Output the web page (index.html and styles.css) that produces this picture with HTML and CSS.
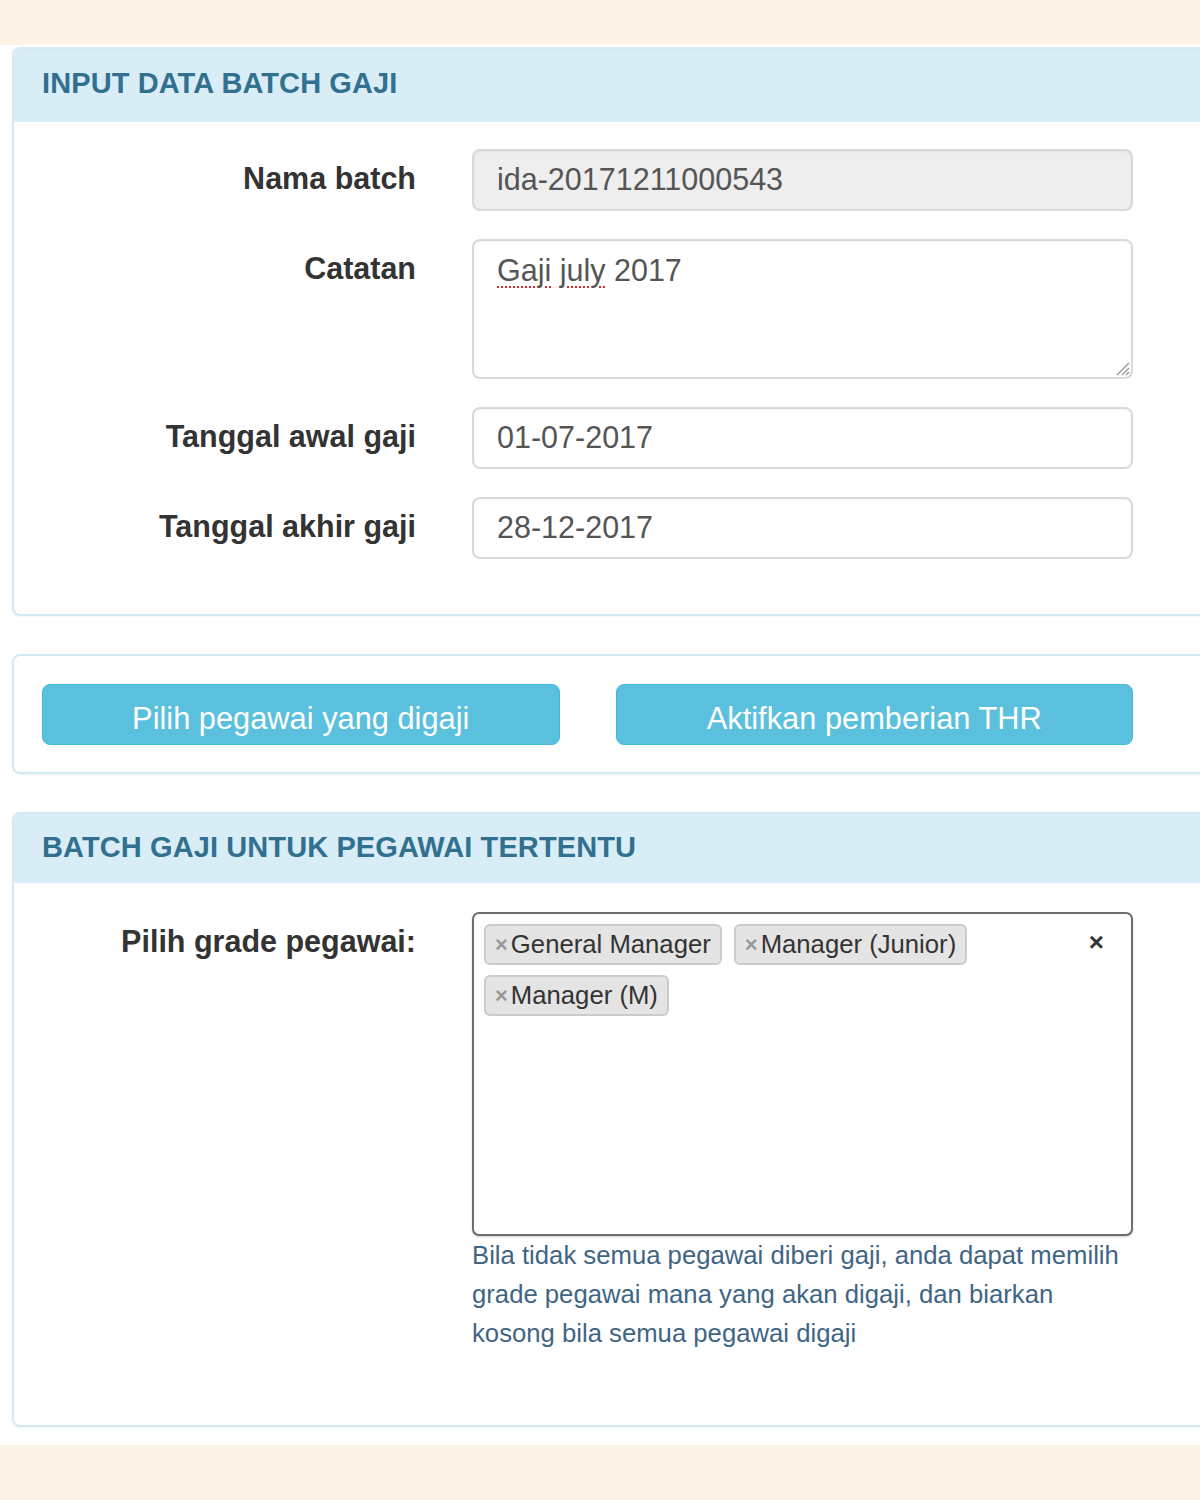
FILE: index.html
```html
<!DOCTYPE html>
<html lang="id">
<head>
<meta charset="utf-8">
<title>Input Data Batch Gaji</title>
<link rel="stylesheet" href="styles.css">
</head>
<body>
<div class="page">
  <section class="panel">
    <div class="panel-heading heading-lg"><h3 class="panel-title">INPUT DATA BATCH GAJI</h3></div>
    <div class="panel-body form-body">
      <div class="form-row">
        <label class="form-label">Nama batch</label>
        <div class="form-control readonly">ida-20171211000543</div>
      </div>
      <div class="form-row">
        <label class="form-label">Catatan</label>
        <div class="form-control textarea"><span class="misspelled">Gaji</span> <span class="misspelled">july</span> 2017<svg class="grip" width="16" height="16" viewBox="0 0 16 16"><path d="M15 3 L3 15 M15 8 L8 15 M15 12 L12 15" stroke="#9a9a9a" stroke-width="1.4" fill="none"/></svg></div>
      </div>
      <div class="form-row">
        <label class="form-label">Tanggal awal gaji</label>
        <div class="form-control">01-07-2017</div>
      </div>
      <div class="form-row">
        <label class="form-label">Tanggal akhir gaji</label>
        <div class="form-control">28-12-2017</div>
      </div>
    </div>
  </section>

  <section class="panel panel-actions">
    <div class="btn-row">
      <button class="btn btn-info">Pilih pegawai yang digaji</button>
      <button class="btn btn-info">Aktifkan pemberian THR</button>
    </div>
  </section>

  <section class="panel">
    <div class="panel-heading heading-sm"><h3 class="panel-title">BATCH GAJI UNTUK PEGAWAI TERTENTU</h3></div>
    <div class="panel-body grade-body">
      <div class="form-row">
        <label class="form-label">Pilih grade pegawai:</label>
        <div class="grade-field">
          <div class="select-box">
            <ul class="choices">
              <li class="choice"><span class="choice-x">×</span>General Manager</li>
              <li class="choice"><span class="choice-x">×</span>Manager (Junior)</li>
              <li class="choice"><span class="choice-x">×</span>Manager (M)</li>
            </ul>
            <span class="clear-all">×</span>
          </div>
          <p class="help-block">Bila tidak semua pegawai diberi gaji, anda dapat memilih grade pegawai mana yang akan digaji, dan biarkan kosong bila semua pegawai digaji</p>
        </div>
      </div>
    </div>
  </section>
</div>
</body>
</html>
```

FILE: styles.css
```css
* { box-sizing: border-box; }

html, body {
  margin: 0;
  padding: 0;
}

body {
  background: #fdf3e6;
  font-family: "Liberation Sans", Arial, Helvetica, sans-serif;
  color: #333;
  overflow: hidden;
}

.page {
  margin-top: 45px;
  height: 1400px;
  background: #ffffff;
  padding: 2px 0 0 12px;
  overflow: hidden;
}

.panel {
  width: 1230px;
  background: #fff;
  border: 2px solid #d5e9f2;
  border-radius: 8px;
  box-shadow: 0 1px 2px rgba(120, 170, 200, 0.12);
}

.panel + .panel {
  margin-top: 38px;
}

.panel-heading {
  background: #d9edf7;
  border-radius: 6px 6px 0 0;
  display: flex;
  align-items: center;
  padding-left: 28px;
  padding-bottom: 5px;
}

.heading-lg { height: 73px; }
.heading-sm { height: 69px; padding-bottom: 2px; }

.panel-title {
  margin: 0;
  font-size: 29px;
  font-weight: 700;
  color: #31708f;
  letter-spacing: 0.1px;
}

.panel-body {
  padding-left: 28px;
}

.form-body {
  padding-top: 27px;
  padding-bottom: 55px;
  display: flex;
  flex-direction: column;
  gap: 28px;
}

.form-row {
  display: grid;
  grid-template-columns: 374px 661px;
  column-gap: 56px;
  align-items: start;
}

.form-label {
  text-align: right;
  font-weight: 700;
  font-size: 30.5px;
  line-height: 58px;
  color: #333;
}

.form-control {
  height: 62px;
  border: 2px solid #d9d9d9;
  border-radius: 8px;
  background: #fff;
  padding: 0 23px;
  font-size: 30.5px;
  line-height: 56px;
  color: #555;
  box-shadow: inset 0 1px 2px rgba(0, 0, 0, 0.05);
}

.form-control.readonly {
  background: #eeeeee;
}

.form-control.textarea {
  position: relative;
  height: 140px;
  padding-top: 7px;
  line-height: 44px;
}

.misspelled {
  text-decoration: underline dotted #e0282a;
  text-decoration-thickness: 2px;
  text-underline-offset: 5px;
}

.grip {
  position: absolute;
  right: 1px;
  bottom: 1px;
}

.panel-actions {
  padding: 28px 0 27px 28px;
}

.btn-row {
  width: 1091px;
  display: grid;
  grid-template-columns: 1fr 1fr;
  column-gap: 56px;
}

.btn {
  height: 61px;
  border: 1px solid #46b8da;
  border-radius: 8px;
  background: #5bc0de;
  color: #fff;
  font-family: "Liberation Sans", Arial, Helvetica, sans-serif;
  font-size: 30.8px;
  font-weight: 400;
  letter-spacing: 0;
  padding: 9px 0 0 0;
  cursor: pointer;
}

.grade-body {
  padding-top: 29px;
  padding-bottom: 72px;
}

.select-box {
  position: relative;
  height: 324px;
  border: 2px solid #6e6e6e;
  border-radius: 7px;
  background: #fff;
  box-shadow: 0 1px 2px rgba(0, 0, 0, 0.2);
  padding: 10px 60px 0 10px;
}

.choices {
  list-style: none;
  margin: 0;
  padding: 0;
  display: flex;
  flex-wrap: wrap;
  column-gap: 12px;
  row-gap: 10px;
}

.choice {
  height: 41px;
  border: 2px solid #cbcbcb;
  border-radius: 6px;
  background: #e4e4e4;
  padding: 0 9px 0 9px;
  font-size: 25.7px;
  line-height: 37px;
  color: #333;
  white-space: nowrap;
  display: flex;
  align-items: center;
}

.choice-x {
  color: #999;
  font-size: 22px;
  font-weight: 700;
  margin-right: 3px;
}

.clear-all {
  position: absolute;
  top: 10px;
  right: 27px;
  font-size: 26px;
  font-weight: 700;
  line-height: 37px;
  color: #333;
}

.help-block {
  max-width: 655px;
  margin: 0;
  font-size: 25.7px;
  line-height: 39px;
  color: #3f6584;
  letter-spacing: 0;
}
```
